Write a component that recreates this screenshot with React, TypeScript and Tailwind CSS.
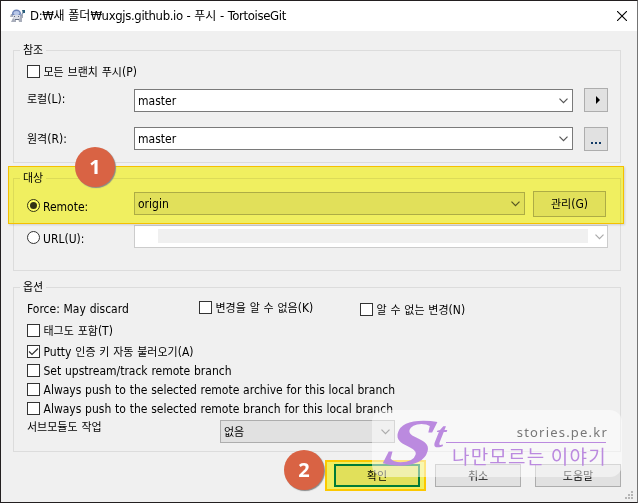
import React from "react";
import { clsx } from "clsx";

const latin = "font-['DejaVu_Sans_Condensed','DejaVu_Sans','Noto_Sans_CJK_KR',sans-serif] [font-stretch:condensed]";

function Label({ text, className, title }: { text: string; className?: string; title?: boolean }) {
  const runs = text.split(/([\uac00-\ud7a3]+)/);
  return (
    <span
      className={clsx(
        "leading-[16px] whitespace-pre text-black",
        title ? "text-[13px] tracking-[-0.35px] [word-spacing:0.4px]" : "text-[12px] tracking-normal [word-spacing:0.35px]",
        className,
      )}
    >
      {runs.map((run, i) =>
        i % 2 ? (
          <span
            key={i}
            className={clsx(
              "font-['Noto_Sans_CJK_KR',sans-serif] leading-[1px] tracking-normal",
              title ? "text-[12px]" : "text-[11px]",
            )}
          >
            {run}
          </span>
        ) : (
          run
        ),
      )}
    </span>
  );
}

function Box({ text, checked, className }: { text: string; checked?: boolean; className?: string }) {
  return (
    <div className={clsx("flex h-[13px] items-center", className)}>
      <span className="flex size-[13px] shrink-0 items-center justify-center border border-[#333] bg-white">
        {checked && (
          <svg viewBox="0 0 11 11" className="size-[11px]" fill="none" stroke="#333" strokeWidth="1.2">
            <path d="M1 5.5 4 8.5 10 2.5" />
          </svg>
        )}
      </span>
      <Label text={text} className="mt-px ml-[3.5px]" />
    </div>
  );
}

function Radio({ text, checked }: { text: string; checked?: boolean }) {
  return (
    <div className="flex w-[107px] items-center">
      <span className="flex size-[13px] shrink-0 items-center justify-center rounded-full border border-[#333] bg-white">
        {checked && <span className="size-[7px] rounded-full bg-[#333]" />}
      </span>
      <Label text={text} className="mt-[2px] ml-[3px]" />
    </div>
  );
}

function Chevron({ className }: { className?: string }) {
  return (
    <svg viewBox="0 0 9 6" className={clsx("h-[6px] w-[9px] shrink-0", className)} fill="none" stroke="currentColor" strokeWidth="1.2">
      <path d="M.5.7 4.5 4.7 8.5.7" />
    </svg>
  );
}

function Combo({ value, className }: { value: string; className?: string }) {
  return (
    <div className={clsx("flex h-[23px] shrink-0 items-center justify-between border pr-1 pl-[3px] text-[#555]", className)}>
      <Label text={value} />
      <Chevron />
    </div>
  );
}

function Group({ title, className, children }: { title: string; className?: string; children: React.ReactNode }) {
  return (
    <section className={clsx("relative mx-3 w-[608px] border border-[#dcdcdc] pl-[13px]", className)}>
      <div className="absolute -top-[9px] left-[6px] flex h-4 bg-[#f0f0f0] px-[3px]">
        <Label text={title} />
      </div>
      {children}
    </section>
  );
}

const face = "flex shrink-0 items-center justify-center bg-[#e1e1e1]";
const button = "flex shrink-0 items-center justify-center border border-[#adadad] bg-[#e1e1e1]";

function Badge({ n, className }: { n: number; className: string }) {
  return (
    <div
      className={clsx(
        "absolute flex size-10 items-center justify-center rounded-full bg-[#d96344] font-['Open_Sans',sans-serif] text-[20px] font-bold text-white shadow-[1px_1px_1px_#888] [font-stretch:normal]",
        className,
      )}
    >
      {n}
    </div>
  );
}

export default function App() {
  return (
    <div className={clsx("relative h-[503px] w-[638px] overflow-hidden border border-[#231f20] border-r-[#747474] bg-[#f0f0f0]", latin)}>
      <header className="flex h-[30px] items-center bg-white pr-[10px] pl-2">
        <svg viewBox="0 0 17 14" className="h-[14px] w-[17px]">
          <path d="M2 5h3v3H1zM10 6h4v3h-4zM4 9h3v4H2zM9 9h4v4h-3z" fill="#a8adba" />
          <ellipse cx="7.5" cy="4.5" rx="4.5" ry="4" fill="#6c83b8" />
          <ellipse cx="7.5" cy="4" rx="3" ry="2" fill="#b8c7e8" />
          <path d="M4 6h7v3l-2 2H6L4 9z" fill="#d9dce5" />
          <path d="M5 7h1v1H5zM9 7h1v1H9zM6 10h4v1H6z" fill="#626b80" />
          <path d="m12 6 2-4 1 1-2 4z" fill="#8594ae" />
          <path d="M13 1h3v3h-2z" fill="#285d7a" />
        </svg>
        <Label title text="D:₩새 폴더₩uxgjs.github.io - 푸시 - TortoiseGit" className="ml-[4px]" />
        <svg viewBox="0 0 10 10" className="ml-auto size-[10px]" stroke="#000" strokeWidth="1.1">
          <path d="m0 0 10 10M10 0 0 10" />
        </svg>
      </header>

      <Group title="참조" className="mt-[19px] h-[113px] pt-[14px]">
        <Box text="모든 브랜치 푸시(P)" />
        <div className="mt-[10px] flex h-6 items-start">
          <Label text="로컬(L):" className="mt-[3px] w-[107px]" />
          <Combo value="master" className="mt-px w-[439px] border-[#7a7a7a] bg-white" />
          <div className={clsx(button, "ml-[11px] size-6")}>
            <span className="ml-1 border-y-4 border-l-4 border-y-transparent border-l-black" />
          </div>
        </div>
        <div className="mt-[15px] flex h-6 items-start">
          <Label text="원격(R):" className="mt-[4px] w-[107px]" />
          <Combo value="master" className="w-[439px] border-[#7a7a7a] bg-white" />
          <div className={clsx(button, "ml-[11px] size-6")}>
            <span className="mt-[8px] flex gap-[2px]">
              <span className="size-[2px] bg-[#123a66]" />
              <span className="size-[2px] bg-[#123a66]" />
              <span className="size-[2px] bg-[#123a66]" />
            </span>
          </div>
        </div>
      </Group>

      <Group title="대상" className="mt-[15px] h-[93px] pt-[12px]">
        <div className="flex h-[26px] items-center">
          <div className="mt-[3px]">
            <Radio text="Remote:" checked />
          </div>
          <Combo value="origin" className="-mt-px w-[391px] border-[#adadad] bg-[#e1e1e1]" />
          <div className={clsx(button, "ml-2 h-[26px] w-[73px]")}>
            <Label text="관리(G)" />
          </div>
        </div>
        <div className="mt-2 flex h-[23px] items-center">
          <div className="mt-[2px]">
            <Radio text="URL(U):" />
          </div>
          <div className="flex h-[23px] w-[474px] items-center border border-[#ccc] bg-white pl-[23px] text-[#aaa]">
            <div className="mb-px h-[14px] w-[430px] bg-[#f0f0f0]" />
            <Chevron className="ml-[7px]" />
          </div>
        </div>
      </Group>

      <Group title="옵션" className="mt-4 h-[165px] pt-[13px]">
        <div className="flex h-[15px] items-start">
          <Label text="Force: May discard" className="w-[172px]" />
          <Box text="변경을 알 수 없음(K)" className="w-[161px]" />
          <Box text="알 수 없는 변경(N)" className="mt-[2px]" />
        </div>
        <Box text="태그도 포함(T)" className="mt-[8px]" />
        <Box text="Putty 인증 키 자동 불러오기(A)" checked className="mt-[8px]" />
        <Box text="Set upstream/track remote branch" className="mt-[6px]" />
        <Box text="Always push to the selected remote archive for this local branch" className="mt-[6px]" />
        <Box text="Always push to the selected remote branch for this local branch" className="mt-[6px]" />
        <div className="mt-[5px] flex items-start">
          <Label text="서브모듈도 작업" className="-mt-px w-[193px]" />
          <Combo value="없음" className="h-[22px] w-[175px] border-[#adadad] bg-[#e1e1e1]" />
        </div>
      </Group>

      <footer className="mt-[12px] flex pl-[333px]">
        <div className={clsx(face, "h-[23px] w-[86px] border-2 border-[#007b8a]")}>
          <Label text="확인" />
        </div>
        <div className={clsx(button, "ml-[15px] h-[23px] w-[86px]")}>
          <Label text="취소" />
        </div>
        <div className={clsx(button, "ml-[14px] h-[23px] w-[86px]")}>
          <Label text="도움말" />
        </div>
      </footer>
      <svg viewBox="0 0 9 9" className="absolute right-[3px] bottom-[2px] size-[9px]" fill="#b5b5b5">
        <path d="M6 0h2v2H6zM3 3h2v2H3zM6 3h2v2H6zM0 6h2v2H0zM3 6h2v2H3zM6 6h2v2H6z" />
      </svg>

      <div className="absolute top-[165px] left-[7px] h-[58px] w-[616px] bg-[#fffe66] mix-blend-multiply" />
      <div className="absolute top-[165px] left-[7px] h-[58px] w-[616px] border-[1.5px] border-[#f5c000] shadow-[1px_1px_2px_#0002]" />
      <div className="absolute top-[459px] left-[324px] h-[31px] w-[101px] bg-[#fffe66] mix-blend-multiply" />
      <div className="absolute top-[459px] left-[324px] h-[31px] w-[101px] border-2 border-[#fcc800]" />
      <Badge n={1} className="top-[146px] left-[74px]" />
      <Badge n={2} className="top-[449px] left-[283px]" />

      <div className="absolute top-[409px] left-[371px] h-[67px] w-[250px] rounded-[12px] bg-white/50 text-[#bb8adf] [font-stretch:normal]">
        <span className="absolute top-[1px] left-[15px] origin-left scale-x-[1.3] -skew-x-12 font-['Liberation_Serif',serif] text-[67px] leading-[62px] font-bold italic">
          S
        </span>
        <span className="absolute top-[7px] left-[63px] -skew-x-12 font-['Liberation_Serif',serif] text-[37px] leading-[36px] font-bold italic">
          t
        </span>
        <span className="absolute top-[13px] right-[14px] font-['Noto_Sans',sans-serif] text-[13px] leading-[18px] tracking-[1.2px] text-[#777]">
          stories.pe.kr
        </span>
        <span className="absolute top-[32px] left-[74px] h-px w-[160px] bg-[#bb8adf]" />
        <span className="absolute top-[34px] left-[80px] font-['Noto_Sans_CJK_KR',sans-serif] text-[19px] leading-[24px] tracking-[1.2px] whitespace-nowrap">
          나만모르는 이야기
        </span>
      </div>
    </div>
  );
}
